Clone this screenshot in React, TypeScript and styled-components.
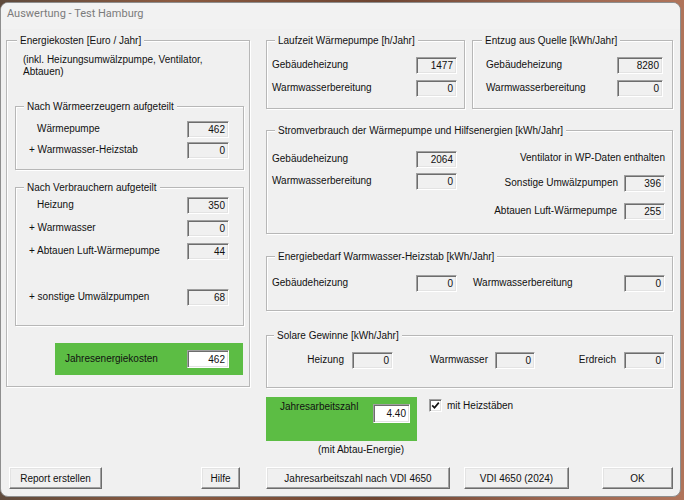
import React from 'react';
import styled, { createGlobalStyle } from 'styled-components';

const GlobalStyle = createGlobalStyle`
  html, body {
    margin: 0;
    padding: 0;
  }
  body {
    width: 684px;
    height: 500px;
    overflow: hidden;
    background: linear-gradient(90deg, #5f4a3c 0%, #8c5b41 25%, #6e4532 55%, #9b6651 80%, #b0745a 100%);
    font-family: 'Liberation Sans', Arial, sans-serif;
    font-size: 10px;
    color: #111;
  }
`;

const Window = styled.div`
  box-sizing: border-box;
  width: 681px;
  height: 495px;
  margin-top: 2px;
  background: #f0f0f0;
  border: 1px solid #8e8e8e;
  border-radius: 8px;
  overflow: hidden;
  display: flex;
  flex-direction: column;
`;

const TitleBar = styled.div`
  height: 26px;
  line-height: 22px;
  padding-left: 6px;
  font-family: Roboto, 'Liberation Sans', sans-serif;
  font-size: 11px;
  color: #7b7b7b;
  background: #f2f2f2;
`;

const Client = styled.div`
  padding: 11px 0 0 5px;
  display: flex;
  flex-direction: column;
`;

const Main = styled.div`
  display: flex;
  align-items: flex-start;
`;

const Group = styled.div<{ $w?: number; $h: number; $mt?: number; $ml?: number }>`
  box-sizing: border-box;
  width: ${(p) => (p.$w ? `${p.$w}px` : 'auto')};
  height: ${(p) => p.$h}px;
  margin-top: ${(p) => p.$mt ?? 0}px;
  margin-left: ${(p) => p.$ml ?? 0}px;
  border: 1px solid #b7b7b7;
  box-shadow: inset 1px 1px 0 #fff, 1px 1px 0 #fff;
  display: flex;
  flex-direction: column;
`;

const GroupTitle = styled.div<{ $indent?: number }>`
  align-self: flex-start;
  height: 13px;
  line-height: 13px;
  margin: -7px 0 0 ${(p) => p.$indent ?? 8}px;
  padding: 0 3px;
  background: #f0f0f0;
  white-space: nowrap;
`;

const Note = styled.div`
  width: 200px;
  margin: 7px 0 0 16px;
  line-height: 12px;
`;

const Row = styled.div<{ $mt?: number; $pl?: number; $pr?: number; $h?: number; $end?: boolean }>`
  display: flex;
  align-items: center;
  justify-content: ${(p) => (p.$end ? 'flex-end' : 'flex-start')};
  height: ${(p) => p.$h ?? 17}px;
  margin-top: ${(p) => p.$mt ?? 0}px;
  padding-left: ${(p) => p.$pl ?? 0}px;
  padding-right: ${(p) => p.$pr ?? 0}px;
`;

const Label = styled.span`
  white-space: nowrap;
  line-height: 13px;
  margin-top: -2px;
`;

const Field = styled.div<{ $w: number; $h?: number; $gap?: number; $white?: boolean }>`
  box-sizing: border-box;
  flex: 0 0 auto;
  width: ${(p) => p.$w}px;
  height: ${(p) => p.$h ?? 17}px;
  margin-left: ${(p) => (p.$gap != null ? `${p.$gap}px` : 'auto')};
  padding-right: 3px;
  display: flex;
  align-items: center;
  justify-content: flex-end;
  background: ${(p) => (p.$white ? '#fff' : '#f0f0f0')};
  border: 1px solid;
  border-color: #a0a0a0 #fff #fff #a0a0a0;
  box-shadow: inset 1px 1px 0 #6d6d6d, inset -1px -1px 0 #e3e3e3;
`;

const GreenPanel = styled.div<{ $w: number; $h: number; $mt?: number; $ml?: number; $top?: boolean }>`
  box-sizing: border-box;
  width: ${(p) => p.$w}px;
  height: ${(p) => p.$h}px;
  margin-top: ${(p) => p.$mt ?? 0}px;
  margin-left: ${(p) => p.$ml ?? 0}px;
  background: #5cbd44;
  display: flex;
  align-items: ${(p) => (p.$top ? 'flex-start' : 'center')};
`;

const JazLabel = styled.span`
  margin: 3px 0 0 14px;
  line-height: 13px;
  white-space: nowrap;
`;

const RightColumn = styled.div`
  width: 407px;
  margin-left: 16px;
  display: flex;
  flex-direction: column;
`;

const Pair = styled.div`
  display: flex;
  gap: 7px;
`;

const Split = styled.div`
  display: flex;
`;

const Cell = styled.div<{ $w?: number; $pl?: number; $pr?: number }>`
  box-sizing: border-box;
  display: flex;
  flex-direction: column;
  flex: ${(p) => (p.$w ? `0 0 ${p.$w}px` : '1 1 auto')};
  padding-left: ${(p) => p.$pl ?? 0}px;
  padding-right: ${(p) => p.$pr ?? 0}px;
`;

const SolarCell = styled.div<{ $w: number }>`
  flex: 0 0 ${(p) => p.$w}px;
  display: flex;
  align-items: center;
  justify-content: flex-end;
`;

const JazRow = styled.div`
  display: flex;
  align-items: flex-start;
  margin-top: 9px;
`;

const CheckOption = styled.label`
  display: flex;
  align-items: center;
  gap: 5px;
  margin: 2px 0 0 12px;
  font-size: 10px;
  line-height: 13px;
`;

const CheckBox = styled.span`
  box-sizing: border-box;
  width: 13px;
  height: 13px;
  background: #fff;
  border: 1px solid;
  border-color: #a0a0a0 #fff #fff #a0a0a0;
  box-shadow: inset 1px 1px 0 #6d6d6d, inset -1px -1px 0 #e3e3e3;
  display: flex;
  align-items: center;
  justify-content: center;
`;

const SubNote = styled.div`
  margin: 2px 0 0 52px;
  line-height: 13px;
`;

const ButtonBar = styled.div`
  display: flex;
  margin-top: 11px;
`;

const Button = styled.button<{ $w: number; $ml: number }>`
  box-sizing: border-box;
  width: ${(p) => p.$w}px;
  height: 22px;
  margin: 0 0 0 ${(p) => p.$ml}px;
  padding: 0;
  font-family: inherit;
  font-size: 10px;
  color: #111;
  background: #f0f0f0;
  border: 1px solid;
  border-color: #fff #6d6d6d #6d6d6d #fff;
  box-shadow: inset -1px -1px 0 #a0a0a0, inset 1px 1px 0 #e3e3e3;
`;

export default function App(): JSX.Element {
  return (
    <>
      <GlobalStyle />
      <Window>
        <TitleBar>Auswertung - Test Hamburg</TitleBar>
        <Client>
          <Main>
            <Group $w={244} $h={347}>
              <GroupTitle $indent={10}>Energiekosten [Euro / Jahr]</GroupTitle>
              <Note>(inkl. Heizungsumwälzpumpe, Ventilator, Abtauen)</Note>

              <Group $w={229} $h={64} $mt={28} $ml={8}>
                <GroupTitle>Nach Wärmeerzeugern aufgeteilt</GroupTitle>
                <Row $mt={8} $pl={21} $pr={14}>
                  <Label>Wärmepumpe</Label>
                  <Field $w={42}>462</Field>
                </Row>
                <Row $mt={4} $pl={13} $pr={14}>
                  <Label>+ Warmwasser-Heizstab</Label>
                  <Field $w={42}>0</Field>
                </Row>
              </Group>

              <Group $w={229} $h={139} $mt={17} $ml={8}>
                <GroupTitle>Nach Verbrauchern aufgeteilt</GroupTitle>
                <Row $mt={3} $pl={21} $pr={14}>
                  <Label>Heizung</Label>
                  <Field $w={42}>350</Field>
                </Row>
                <Row $mt={6} $pl={13} $pr={14}>
                  <Label>+ Warmwasser</Label>
                  <Field $w={42}>0</Field>
                </Row>
                <Row $mt={6} $pl={13} $pr={14}>
                  <Label>+ Abtauen Luft-Wärmepumpe</Label>
                  <Field $w={42}>44</Field>
                </Row>
                <Row $mt={29} $pl={13} $pr={14}>
                  <Label>+ sonstige Umwälzpumpen</Label>
                  <Field $w={42}>68</Field>
                </Row>
              </Group>

              <GreenPanel $w={188} $h={32} $mt={17} $ml={48}>
                <Row $h={32} $pl={10} $pr={14} style={{ flex: 1 }}>
                  <Label>Jahresenergiekosten</Label>
                  <Field $w={42} $h={18} $white>462</Field>
                </Row>
              </GreenPanel>
            </Group>

            <RightColumn>
              <Pair>
                <Group $w={199} $h={69}>
                  <GroupTitle>Laufzeit Wärmepumpe [h/Jahr]</GroupTitle>
                  <Row $mt={10} $pl={5} $pr={7}>
                    <Label>Gebäudeheizung</Label>
                    <Field $w={41}>1477</Field>
                  </Row>
                  <Row $mt={6} $pl={5} $pr={7}>
                    <Label>Warmwasserbereitung</Label>
                    <Field $w={41}>0</Field>
                  </Row>
                </Group>
                <Group $w={201} $h={69}>
                  <GroupTitle $indent={9}>Entzug aus Quelle [kWh/Jahr]</GroupTitle>
                  <Row $mt={10} $pl={13} $pr={9}>
                    <Label>Gebäudeheizung</Label>
                    <Field $w={46}>8280</Field>
                  </Row>
                  <Row $mt={6} $pl={13} $pr={9}>
                    <Label>Warmwasserbereitung</Label>
                    <Field $w={46}>0</Field>
                  </Row>
                </Group>
              </Pair>

              <Group $h={104} $mt={21}>
                <GroupTitle>Stromverbrauch der Wärmepumpe und Hilfsenergien [kWh/Jahr]</GroupTitle>
                <Split>
                  <Cell $w={190} $pl={5}>
                    <Row $mt={14}>
                      <Label>Gebäudeheizung</Label>
                      <Field $w={41}>2064</Field>
                    </Row>
                    <Row $mt={5}>
                      <Label>Warmwasserbereitung</Label>
                      <Field $w={41}>0</Field>
                    </Row>
                  </Cell>
                  <Cell $pr={7}>
                    <Row $mt={13} $end>
                      <Label>Ventilator in WP-Daten enthalten</Label>
                    </Row>
                    <Row $mt={8} $end>
                      <Label>Sonstige Umwälzpumpen</Label>
                      <Field $w={41} $gap={6}>396</Field>
                    </Row>
                    <Row $mt={11} $end>
                      <Label>Abtauen Luft-Wärmepumpe</Label>
                      <Field $w={41} $gap={7}>255</Field>
                    </Row>
                  </Cell>
                </Split>
              </Group>

              <Group $h={55} $mt={22}>
                <GroupTitle>Energiebedarf Warmwasser-Heizstab [kWh/Jahr]</GroupTitle>
                <Split>
                  <Cell $w={190} $pl={5}>
                    <Row $mt={12}>
                      <Label>Gebäudeheizung</Label>
                      <Field $w={41}>0</Field>
                    </Row>
                  </Cell>
                  <Cell $pl={16} $pr={7}>
                    <Row $mt={12}>
                      <Label>Warmwasserbereitung</Label>
                      <Field $w={41}>0</Field>
                    </Row>
                  </Cell>
                </Split>
              </Group>

              <Group $h={53} $mt={24}>
                <GroupTitle $indent={7}>Solare Gewinne [kWh/Jahr]</GroupTitle>
                <Row $mt={10}>
                  <SolarCell $w={126}>
                    <Label>Heizung</Label>
                    <Field $w={41} $gap={8}>0</Field>
                  </SolarCell>
                  <SolarCell $w={142}>
                    <Label>Warmwasser</Label>
                    <Field $w={40} $gap={7}>0</Field>
                  </SolarCell>
                  <SolarCell $w={130}>
                    <Label>Erdreich</Label>
                    <Field $w={41} $gap={8}>0</Field>
                  </SolarCell>
                </Row>
              </Group>

              <JazRow>
                <GreenPanel $w={151} $h={44} $top>
                  <JazLabel>Jahresarbeitszahl</JazLabel>
                  <Field $w={37} $h={19} $white style={{ marginTop: 7, marginRight: 7 }}>
                    4.40
                  </Field>
                </GreenPanel>
                <CheckOption>
                  <CheckBox>
                    <svg width="9" height="9" viewBox="0 0 9 9">
                      <path d="M1.2 4.4 L3.5 6.8 L7.8 1.6" fill="none" stroke="#111" strokeWidth="1.7" />
                    </svg>
                  </CheckBox>
                  mit Heizstäben
                </CheckOption>
              </JazRow>
              <SubNote>(mit Abtau-Energie)</SubNote>
            </RightColumn>
          </Main>

          <ButtonBar>
            <Button $w={93} $ml={3}>Report erstellen</Button>
            <Button $w={39} $ml={99}>Hilfe</Button>
            <Button $w={184} $ml={26}>Jahresarbeitszahl nach VDI 4650</Button>
            <Button $w={105} $ml={14}>VDI 4650 (2024)</Button>
            <Button $w={71} $ml={33}>OK</Button>
          </ButtonBar>
        </Client>
      </Window>
    </>
  );
}
